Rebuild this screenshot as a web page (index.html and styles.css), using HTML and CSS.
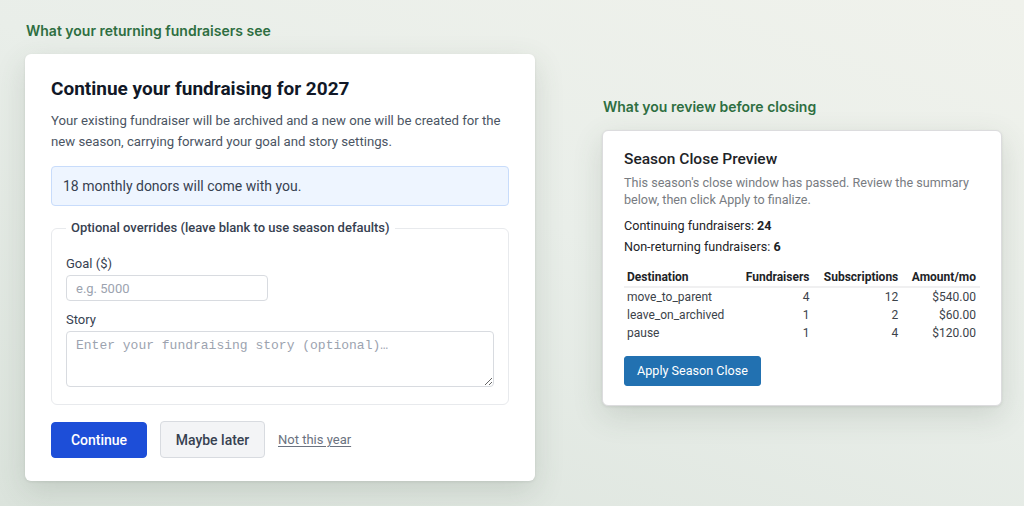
FILE: index.html
```html
<!DOCTYPE html>
<html lang="en">
<head>
<meta charset="utf-8">
<title>Season close</title>
<link rel="stylesheet" href="styles.css">
</head>
<body>
<main class="stage">
  <section class="col col-left">
    <h2 class="eyebrow">What your returning fundraisers see</h2>
    <div class="card card-left">
      <h1 class="title">Continue your fundraising for 2027</h1>
      <p class="lead">Your existing fundraiser will be archived and a new one will be created for the new season, carrying forward your goal and story settings.</p>
      <div class="notice">18 monthly donors will come with you.</div>
      <fieldset class="overrides">
        <legend>Optional overrides (leave blank to use season defaults)</legend>
        <label class="field-label" for="goal">Goal ($)</label>
        <input class="input" id="goal" type="text" placeholder="e.g. 5000">
        <label class="field-label" for="story">Story</label>
        <textarea class="textarea" id="story" placeholder="Enter your fundraising story (optional)…"></textarea>
      </fieldset>
      <div class="actions">
        <button class="btn btn-primary">Continue</button>
        <button class="btn btn-secondary">Maybe later</button>
        <a class="link" href="#">Not this year</a>
      </div>
    </div>
  </section>
  <section class="col col-right">
    <h2 class="eyebrow">What you review before closing</h2>
    <div class="card card-right">
      <h3 class="wp-title">Season Close Preview</h3>
      <p class="wp-desc">This season's close window has passed. Review the summary below, then click Apply to finalize.</p>
      <p class="wp-stat">Continuing fundraisers: <strong>24</strong></p>
      <p class="wp-stat">Non-returning fundraisers: <strong>6</strong></p>
      <table class="wp-table">
        <thead>
          <tr><th class="l">Destination</th><th>Fundraisers</th><th>Subscriptions</th><th>Amount/mo</th></tr>
        </thead>
        <tbody>
          <tr><td class="l">move_to_parent</td><td>4</td><td>12</td><td>$540.00</td></tr>
          <tr><td class="l">leave_on_archived</td><td>1</td><td>2</td><td>$60.00</td></tr>
          <tr><td class="l">pause</td><td>1</td><td>4</td><td>$120.00</td></tr>
        </tbody>
      </table>
      <button class="wp-btn">Apply Season Close</button>
    </div>
  </section>
</main>
</body>
</html>
```

FILE: styles.css
```css
* { box-sizing: border-box; }
html, body { margin: 0; padding: 0; }
body {
  width: 1024px;
  height: 506px;
  overflow: hidden;
  font-family: Roboto, "Noto Sans", sans-serif;
  background: linear-gradient(200deg, #f0f2ec 0%, #e9eee9 45%, #dbe3dc 100%);
}
.stage {
  height: 506px;
  display: flex;
  align-items: center;
  padding: 0 0 4px 25px;
  gap: 67px;
}
.col { display: flex; flex-direction: column; }
.eyebrow {
  margin: 0 0 13px 1px;
  font-family: Inter, sans-serif;
  font-size: 14px;
  line-height: 20px;
  font-weight: 600;
  color: #2e6e41;
}
.card {
  background: #fff;
  border-radius: 6px;
  box-shadow: 0 10px 30px rgba(60, 80, 65, 0.16), 0 1px 3px rgba(0,0,0,0.08);
}
.card-left {
  width: 510px;
  padding: 22px 26px 23px;
}
.title {
  margin: 0;
  font-size: 19px;
  line-height: 26px;
  font-weight: 700;
  color: #111827;
}
.lead {
  margin: 8px 0 0;
  font-size: 13.2px;
  line-height: 21px;
  color: #4b5563;
}
.notice {
  margin-top: 14px;
  padding: 9px 11px;
  background: #eef5ff;
  border: 1px solid #c8dcfb;
  border-radius: 4px;
  font-size: 14px;
  line-height: 20px;
  color: #374151;
}
.overrides {
  margin: 13px 0 0;
  padding: 6px 14px 17px;
  border: 1px solid #e8eaed;
  border-radius: 6px;
  display: flex;
  flex-direction: column;
  min-width: 0;
}
.overrides legend {
  padding: 0 5px;
  font-size: 13px;
  line-height: 18px;
  font-weight: 500;
  color: #374151;
}
.field-label {
  margin-top: 12px;
  font-size: 13px;
  line-height: 18px;
  color: #374151;
}
.input + .field-label { margin-top: 10px; }
.input {
  margin-top: 2px;
  width: 202px;
  height: 26px;
  padding: 0 9px;
  border: 1px solid #d8dbe0;
  border-radius: 4px;
  font-family: Roboto, sans-serif;
  font-size: 13px;
  color: #111827;
  background: #fff;
}
.input::placeholder { color: #9ca3af; }
.textarea {
  margin-top: 2px;
  width: 100%;
  height: 56px;
  padding: 5px 9px;
  border: 1px solid #d8dbe0;
  border-radius: 4px;
  font-family: "Liberation Mono", "DejaVu Sans Mono", monospace;
  font-size: 13px;
  line-height: 17px;
  resize: vertical;
  background: #fff;
}
.textarea::placeholder { color: #9ca3af; }
.actions {
  margin-top: 16px;
  display: flex;
  align-items: center;
  gap: 13px;
}
.btn {
  height: 36px;
  padding: 0;
  border-radius: 4px;
  font-family: Roboto, sans-serif;
  font-size: 14px;
  font-weight: 500;
  white-space: nowrap;
  cursor: pointer;
}
.btn-primary {
  width: 96px;
  background: #1d4ed8;
  border: 1px solid #1d4ed8;
  color: #fff;
}
.btn-secondary {
  width: 105px;
  height: 37px;
  background: #f3f4f6;
  border: 1px solid #d8dbe0;
  color: #374151;
}
.link {
  font-size: 13px;
  color: #6b7280;
  text-decoration: underline;
  text-underline-offset: 2px;
}
.card-right {
  width: 400px;
  padding: 17px 21px 19px;
  border: 1px solid #dcdcde;
}
.wp-title {
  margin: 0;
  font-size: 15.5px;
  line-height: 22px;
  font-weight: 500;
  color: #1d2327;
}
.wp-desc {
  margin: 4px 0 0;
  font-size: 12.6px;
  line-height: 17px;
  color: #787c82;
}
.wp-stat {
  margin: 7px 0 0;
  font-size: 12.6px;
  line-height: 13px;
  padding: 4px 0;
  color: #1d2327;
}
.wp-stat + .wp-stat { margin-top: 0; }
.wp-stat strong { font-weight: 700; }
.wp-table {
  margin-top: 8px;
  width: 100%;
  border-collapse: collapse;
  font-size: 12px;
  color: #3c434a;
}
.wp-table th {
  text-align: right;
  font-weight: 700;
  color: #1d2327;
  padding: 4px 4px 1px;
  line-height: 16px;
  border-bottom: 2px solid #f0f0f1;
}
.wp-table td {
  text-align: right;
  padding: 1px 4px;
  line-height: 16px;
}
.wp-table .l { text-align: left; padding-left: 3px; }
.wp-btn {
  margin-top: 14px;
  height: 30px;
  width: 137px;
  padding: 0;
  background: #2271b1;
  border: 1px solid #2271b1;
  border-radius: 3px;
  color: #fff;
  font-family: Roboto, sans-serif;
  font-size: 12.6px;
  cursor: pointer;
}
```
